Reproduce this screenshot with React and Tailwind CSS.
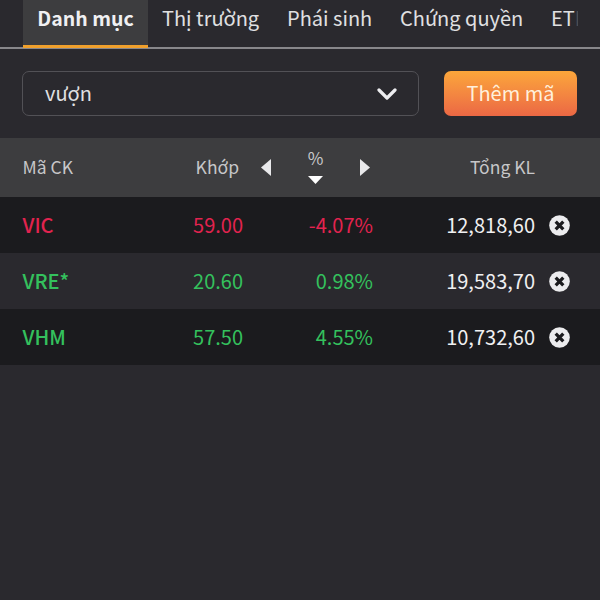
import { useState } from "react"

const TABS = [
  { name: "Thị trường", width: "w-[125px]" },
  { name: "Phái sinh", width: "w-[113px]" },
  { name: "Chứng quyền", width: "w-[151px]" },
]

const ROWS = [
  { code: "VIC", price: "59.00", change: "-4.07%", volume: "12,818,60", color: "text-[#e2234f]" },
  { code: "VRE", star: true, price: "20.60", change: "0.98%", volume: "19,583,70", color: "text-[#34c15d]" },
  { code: "VHM", price: "57.50", change: "4.55%", volume: "10,732,60", color: "text-[#34c15d]" },
]

function RemoveIcon() {
  return (
    <svg viewBox="0 0 21 21" className="block w-[21px] h-[21px]">
      <circle cx="10.5" cy="10.5" r="10.3" fill="#ececee" />
      <path d="M6.7 6.7l7.6 7.6M14.3 6.7l-7.6 7.6" stroke="#1b1b1e" strokeWidth="3.3" />
    </svg>
  )
}

export default function App() {
  const [rows, setRows] = useState(ROWS)

  return (
    <div className="h-[600px] w-[600px] overflow-hidden bg-[#2a292e] font-['Noto_Sans_CJK_SC','Noto_Sans',sans-serif] text-xl text-[#e0e0e2]">
      <nav className="flex h-[49px] border-b-2 border-[#88878b] pl-[23px] whitespace-nowrap">
        <button className="-mb-px h-[48px] w-[125px] shrink-0 border-b-[3px] border-[#f0a02c] bg-[#3d3d3f] pb-[11px] text-center text-[19.5px] font-bold leading-[33px] text-[#f0f0f2]">
          Danh mục
        </button>
        {TABS.map((tab) => (
          <button key={tab.name} className={`${tab.width} h-[35px] shrink-0 pl-[14px] text-left leading-[35px]`}>
            {tab.name}
          </button>
        ))}
        <button className="flex h-[35px] shrink-0 pl-[14px] text-left leading-[35px]">
          ET<span className="w-[3px] overflow-hidden opacity-20">F</span>
        </button>
      </nav>

      <div className="flex h-[89px] items-start gap-[25px] pl-[22px] pt-[22px]">
        <div className="flex h-[45px] w-[397px] items-center justify-between rounded-[7px] border border-[#525156] pl-[22px] pr-[21px]">
          <span className="pb-px">vượn</span>
          <svg viewBox="0 0 20 12" className="h-3 w-5" fill="none" stroke="#ededf0" strokeWidth="3.2" strokeLinecap="round" strokeLinejoin="round">
            <path d="M2 2l8 8 8-8" />
          </svg>
        </div>
        <button className="h-[45px] w-[133px] rounded-[7px] bg-linear-to-b from-[#fba63a] to-[#eb6744] pb-px text-[#fff0dc]">
          Thêm mã
        </button>
      </div>

      <div className="flex h-[59px] items-center bg-[#3d3d3f] pl-[22.5px] text-[17.5px] text-[#c7c7c9]">
        <span className="w-[138.5px] pb-px">Mã CK</span>
        <span className="w-[78px] pb-px text-right">Khớp</span>
        <svg viewBox="0 0 10 17" className="ml-[22px] h-[17px] w-[10px]">
          <path d="M10 0v17L0 8.5z" fill="#e9e9eb" />
        </svg>
        <div className="ml-[31px] flex w-[27px] flex-col items-center pb-1">
          <span className="-mt-[2px] text-[17px] leading-[24px]">%</span>
          <svg viewBox="0 0 15 8" className="mt-[6px] h-2 w-[15px]">
            <path d="M0 0h15L7.5 8z" fill="#fff" />
          </svg>
        </div>
        <svg viewBox="0 0 10 17" className="ml-[31px] h-[17px] w-[10px]">
          <path d="M0 0v17l10-8.5z" fill="#e9e9eb" />
        </svg>
        <span className="ml-auto pb-px pr-[65px]">Tổng KL</span>
      </div>

      {rows.map((row) => (
        <div key={row.code} className="flex h-14 items-center pl-[22.5px] odd:bg-[#2a292e] even:bg-[#1b1b1e]">
          <span className={`flex w-[131px] pb-px font-medium ${row.color}`}>
            {row.code}
            {row.star && <span>*</span>}
          </span>
          <span className={`w-[89.5px] pb-px text-right ${row.color}`}>{row.price}</span>
          <span className={`w-[130px] pb-px text-right ${row.color}`}>{row.change}</span>
          <span className="w-[162px] pb-px text-right text-[#f0f0f2]">{row.volume}</span>
          <button className="ml-[14px]" onClick={() => setRows(rows.filter((r) => r.code !== row.code))}>
            <RemoveIcon />
          </button>
        </div>
      ))}
    </div>
  )
}
